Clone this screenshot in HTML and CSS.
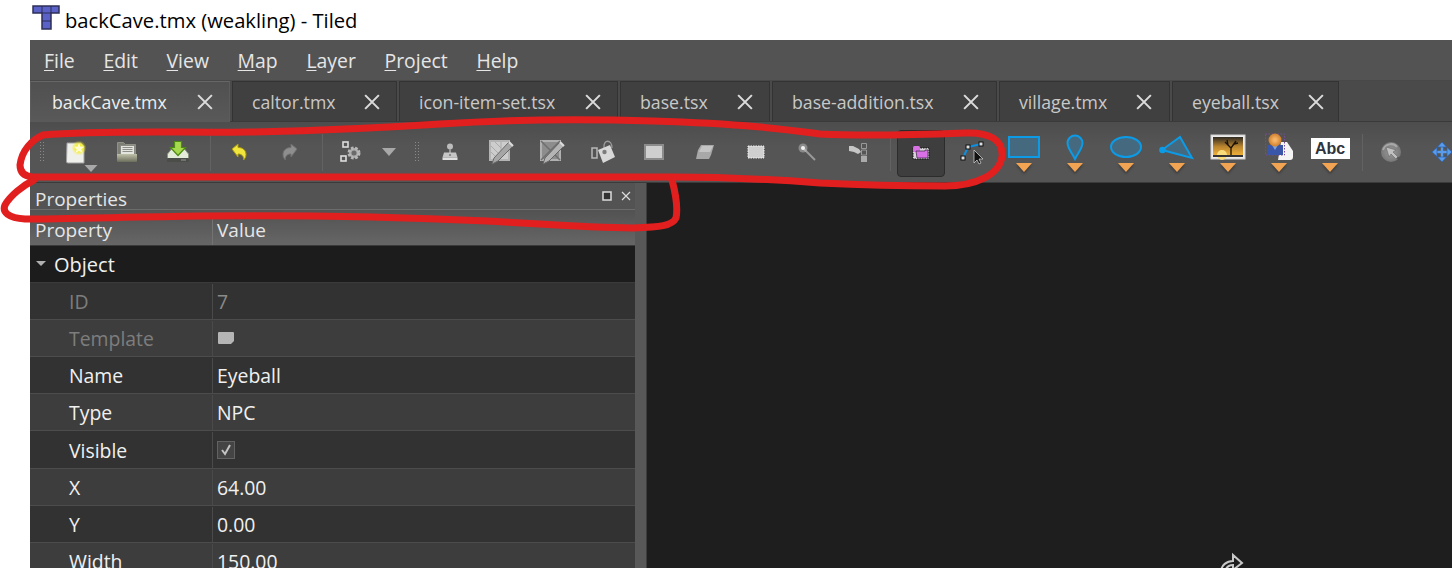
FILE: index.html
```html
<!DOCTYPE html>
<html lang="en">
<head>
<meta charset="utf-8">
<title>backCave.tmx (weakling) - Tiled</title>
<link rel="stylesheet" href="styles.css">
</head>
<body>
<header class="titlebar">
  <svg class="app-icon" width="28" height="26" viewBox="0 0 28 26"><path d="M1 1h26v7h-8v16h-9V8H1z" fill="#5a62c8" stroke="#2c2f55" stroke-width="1.5"/><path d="M10 1v7M19 1v7M10 8h9M10 16h9" stroke="#2c2f55"/></svg>
  <span class="title-text">backCave.tmx (weakling) - Tiled</span>
</header>
<main class="window">
  <nav class="menubar">
    <span class="menu"><u>F</u>ile</span><span class="menu"><u>E</u>dit</span><span class="menu"><u>V</u>iew</span><span class="menu"><u>M</u>ap</span><span class="menu"><u>L</u>ayer</span><span class="menu"><u>P</u>roject</span><span class="menu"><u>H</u>elp</span>
  </nav>
  <div class="tabbar">
    <div class="tab active t1"><span>backCave.tmx</span><svg class="close" viewBox="0 0 14 14"><path d="M1 1l12 12M13 1L1 13"/></svg></div>
    <div class="tab t2"><span>caltor.tmx</span><svg class="close" viewBox="0 0 14 14"><path d="M1 1l12 12M13 1L1 13"/></svg></div>
    <div class="tab t3"><span>icon-item-set.tsx</span><svg class="close" viewBox="0 0 14 14"><path d="M1 1l12 12M13 1L1 13"/></svg></div>
    <div class="tab t4"><span>base.tsx</span><svg class="close" viewBox="0 0 14 14"><path d="M1 1l12 12M13 1L1 13"/></svg></div>
    <div class="tab t5"><span>base-addition.tsx</span><svg class="close" viewBox="0 0 14 14"><path d="M1 1l12 12M13 1L1 13"/></svg></div>
    <div class="tab t6"><span>village.tmx</span><svg class="close" viewBox="0 0 14 14"><path d="M1 1l12 12M13 1L1 13"/></svg></div>
    <div class="tab t7"><span>eyeball.tsx</span><svg class="close" viewBox="0 0 14 14"><path d="M1 1l12 12M13 1L1 13"/></svg></div>
  </div>
  <div class="toolbar">
    <span class="grip first"></span>
    <span class="tool"><svg width="44" height="44" viewBox="0 0 44 44"><defs><radialGradient id="glow"><stop offset="0.35" stop-color="#f4ee10"/><stop offset="1" stop-color="#f4ee10" stop-opacity="0"/></radialGradient></defs><path d="M13 13h14l3 3v17H14a1.500 1.500 0 0 1-1.500-1.500z" fill="#efefeb" stroke="#a0a0a0"/><circle cx="25" cy="18" r="7.500" fill="url(#glow)"/><path d="M25 13l1.500 3.400 3.700.3-2.800 2.500.9 3.600-3.300-1.900-3.300 1.900.9-3.600-2.800-2.500 3.700-.3z" fill="#fefcd0"/><path d="M30.500 35h13L37 42z" fill="#a8a8a8"/></svg></span>
    <span class="tool"><svg width="22" height="22" viewBox="0 0 22 22"><defs><linearGradient id="front" x1="0" y1="0" x2="0" y2="1"><stop offset="0" stop-color="#bfc1aa"/><stop offset="1" stop-color="#6c6e5c"/></linearGradient></defs><path d="M1.500 1.500h6l2 2h10v10h-18z" fill="#7d7f74" stroke="#8f9186"/><rect x="4.500" y="4.500" width="14" height="9" fill="#e4e4de" stroke="#8a8a84"/><path d="M6.500 6.500h10M6.500 8.500h10M6.500 10.500h10" stroke="#8e8e88"/><path d="M1 13h20v7a1 1 0 0 1-1 1H2a1 1 0 0 1-1-1z" fill="url(#front)"/></svg></span>
    <span class="tool"><svg width="24" height="24" viewBox="0 0 24 24"><path d="M1.500 14l4-5h13l4 5v6h-21z" fill="#e4ebd9" stroke="#8b9084"/><rect x="1" y="18" width="22" height="4" rx="1" fill="#4a4d48"/><path d="M15 20h5" stroke="#999"/><path d="M8.500 1.500h7v6h4L12 15.500 4.500 7.500h4z" fill="#a6da4c" stroke="#4f8a12" stroke-width="1.200"/></svg></span>
    <span class="sep"></span>
    <span class="tool"><svg width="16" height="18" viewBox="0 0 16 18"><path d="M1 6l6-5v3.500c5 0 8 3 8 7 0 3-1.500 4.500-2.500 5.500.5-3.500-1.500-6-5.500-6V14z" fill="#f2e63c" stroke="#a89a10"/></svg></span>
    <span class="tool"><svg width="16" height="18" viewBox="0 0 16 18"><path d="M15 6L9 1v3.500c-5 0-8 3-8 7 0 3 1.500 4.500 2.500 5.500C3 13.500 5 11 9 11V14z" fill="#8e8e8e" stroke="#707070"/></svg></span>
    <span class="sep"></span>
    <span class="tool"><svg width="22" height="22" viewBox="0 0 22 22"><rect x="3" y="1" width="5" height="5" fill="#555" stroke="#ddd" stroke-width="1.600"/><rect x="1" y="15" width="5" height="5" fill="#555" stroke="#ddd" stroke-width="1.600"/><circle cx="14" cy="12" r="5" fill="#aaa" stroke="#b8b8b8" stroke-width="3" stroke-dasharray="2.500 1.500"/><circle cx="14" cy="12" r="2.500" fill="#6a6a6a"/></svg></span>
    <span class="drop"><svg width="14" height="8" viewBox="0 0 14 8"><path d="M0 0h14L7 8z" fill="#a8a8a8"/></svg></span>
    <span class="grip second"></span>
    <span class="tool"><svg width="16" height="18" viewBox="0 0 16 18"><circle cx="8" cy="3.500" r="3" fill="#bcbcbc"/><path d="M7 6h2v4H7z" fill="#999"/><path d="M2 9.500h12l1.500 5h-15z" fill="#c6c6c6"/><rect x=".5" y="14.500" width="15" height="2.500" fill="#e0e0e0"/><circle cx="8" cy="12" r="1" fill="#777"/></svg></span>
    <span class="tool"><svg width="26" height="26" viewBox="0 0 26 26"><rect x="2" y="2" width="19" height="19" fill="#cdcdcd" stroke="#b4b4b4" stroke-width="2"/><path d="M3 7l9 9M7 3l6 6M3 13l6 6M13 3v9h7" stroke="#aaa" fill="none"/><path d="M25 7l-15 15-6 3 2-6L21 3z" fill="#a6a6a6" stroke="#6a6a6a"/><path d="M21 3l4 4" stroke="#ddd" stroke-width="2"/></svg></span>
    <span class="tool"><svg width="26" height="26" viewBox="0 0 26 26"><rect x="2" y="2" width="19" height="19" fill="#8d8d8d" stroke="#b0b0b0" stroke-width="2"/><path d="M2 2l19 19M21 2L2 21" stroke="#6e6e6e" stroke-width="1.500"/><path d="M25 7l-15 15-6 3 2-6L21 3z" fill="#b4b4b4" stroke="#666"/><path d="M21 3l4 4" stroke="#ddd" stroke-width="2"/></svg></span>
    <span class="tool"><svg width="26" height="26" viewBox="0 0 26 26"><path d="M14 9c-1-9 8-9 8 0" fill="none" stroke="#9c9c9c" stroke-width="1.300"/><path d="M8 11l12-5 5 12-12 6z" fill="#d8d8d8"/><circle cx="14.500" cy="13" r="2.200" fill="#7c7c7c"/><path d="M2 9h5v10H2z" fill="none" stroke="#b8b8b8" stroke-width="1.500"/></svg></span>
    <span class="tool"><svg width="20" height="16" viewBox="0 0 20 16"><rect x="1" y="1" width="18" height="14" fill="#cfcfcf" stroke="#8c8c8c" stroke-width="2"/></svg></span>
    <span class="tool"><svg width="20" height="16" viewBox="0 0 20 16"><path d="M1 15l2-9 3-5h13l-3 10-2 4z" fill="#a8a8a8"/><path d="M4 8l3-6h11l-3 6z" fill="#c4c4c4"/></svg></span>
    <span class="tool"><svg width="18" height="14" viewBox="0 0 18 14"><rect x="1" y="1" width="16" height="12" fill="#cfcfcf" stroke="#f2f2f2" stroke-dasharray="1.500 1"/></svg></span>
    <span class="tool"><svg width="18" height="18" viewBox="0 0 18 18"><path d="M5 5l12 12" stroke="#999" stroke-width="2"/><circle cx="5" cy="5" r="4.500" fill="#ccc" opacity=".45"/><circle cx="5" cy="5" r="2" fill="#f2f2f2"/></svg></span>
    <span class="tool"><svg width="20" height="22" viewBox="0 0 20 22"><path d="M1 5h4l6 3 2 3-3 2-4-2-5-1z" fill="#c6c6c6"/><path d="M13.500 2.500h5v5h-5zM13.500 9h5v5h-5z" fill="none" stroke="#999"/><rect x="13" y="15" width="6" height="6" fill="#aaa"/></svg></span>
    <span class="sep wide"></span>
    <span class="tool selected"><svg width="18" height="14" viewBox="0 0 18 14"><rect x="1" y="2" width="16" height="11" fill="#d9d4da" stroke="#111" stroke-dasharray="1.500 1"/><rect x="1" y="0" width="7" height="6" rx="1.500" fill="#d970e6"/><path d="M4 5h9V4h3v8H5z" fill="#d970e6" stroke="#30203a" stroke-width=".7"/></svg></span>
    <span class="tool edit"><svg width="26" height="26" viewBox="0 0 26 26"><path d="M3 19L8 8l13-3" fill="none" stroke="#0e8fe0" stroke-width="2"/><rect x="1" y="17" width="4" height="4" fill="#ddd" stroke="#111"/><rect x="6" y="6" width="4" height="4" fill="#ddd" stroke="#111"/><rect x="19" y="3" width="4" height="4" fill="#ddd" stroke="#111"/><path d="M14 11v13l3-3 2 4 2-1-2-4h4z" fill="#111" stroke="#ddd" stroke-width=".7"/></svg></span>
    <span class="tool obj"><svg width="34" height="26" viewBox="0 0 34 26"><rect x="2" y="3" width="30" height="20" fill="#456a80" stroke="#0c9be6" stroke-width="2"/></svg><i class="caret"></i></span>
    <span class="tool obj"><svg width="20" height="26" viewBox="0 0 20 26"><path d="M10 25C7 19 2.500 14 2.500 9a7.500 7.500 0 0 1 15 0c0 5-4.500 10-7.500 16z" fill="#456a80" stroke="#0c9be6" stroke-width="2"/></svg><i class="caret"></i></span>
    <span class="tool obj"><svg width="34" height="26" viewBox="0 0 34 26"><ellipse cx="17" cy="13" rx="15" ry="10" fill="#456a80" stroke="#0c9be6" stroke-width="2"/></svg><i class="caret"></i></span>
    <span class="tool obj"><svg width="36" height="26" viewBox="0 0 36 26"><path d="M3 16L21 3l12 21z" fill="#456a80" stroke="#0c9be6" stroke-width="2"/><circle cx="3.500" cy="16" r="3.300" fill="#0c9be6"/></svg><i class="caret"></i></span>
    <span class="tool obj"><svg width="36" height="26" viewBox="0 0 36 26"><defs><linearGradient id="sky" x1="0" y1="0" x2="0" y2="1"><stop offset="0" stop-color="#2e2a22"/><stop offset=".5" stop-color="#b9842e"/><stop offset="1" stop-color="#f4b43a"/></linearGradient></defs><rect x="1" y="1" width="34" height="24" fill="#ececec" stroke="#cfcfcf"/><rect x="3" y="3" width="30" height="19" fill="url(#sky)"/><circle cx="12" cy="21" r="5" fill="#f8dc7c"/><rect x="3" y="21" width="30" height="2" fill="#333"/><path d="M21 21v-8M21 14l-6-6M21 14l5-7M18 11l-1-5M24 10l4-1" stroke="#1a1208" stroke-width="1.300" fill="none"/></svg><i class="caret"></i></span>
    <span class="tool obj"><svg width="30" height="26" viewBox="0 0 30 26"><defs><radialGradient id="sun"><stop offset="0.2" stop-color="#f6b468"/><stop offset="1" stop-color="#cf7f2c"/></radialGradient></defs><path d="M17 8h6l6 9v6a3 3 0 0 1-3 3H14z" fill="#f4f4f4"/><rect x="1.500" y="0" width="19" height="21" fill="none" stroke="#7a4a9a" stroke-dasharray="1.500 1.500"/><path d="M3 11h16v10H3z" fill="#3a56a8"/><path d="M8 11l3 5 3-5z" fill="#7fa4d8"/><circle cx="11" cy="6" r="6.500" fill="url(#sun)"/></svg><i class="caret"></i></span>
    <span class="tool obj"><span class="abc">Abc</span><i class="caret"></i></span>
    <span class="sep"></span>
    <span class="tool"><svg width="22" height="22" viewBox="0 0 22 22"><defs><radialGradient id="ball"><stop offset="0" stop-color="#9a9a9a"/><stop offset="1" stop-color="#787878"/></radialGradient></defs><circle cx="11" cy="11" r="10" fill="url(#ball)"/><path d="M3 9c2-6 10-8 14-3" fill="none" stroke="#a8a8a8" stroke-width="2"/><path d="M6 6l10 3-3 2 5 5-2 2-5-5-2 3z" fill="#c0c0c0" stroke="#666" stroke-width=".6"/><path d="M16 17l5-2-1 4z" fill="#555"/></svg></span>
    <span class="tool"><svg width="20" height="20" viewBox="0 0 20 20"><path d="M10 2v16M2 10h16" stroke="#5a9cec" stroke-width="2.400"/><path d="M10 0L5.500 5h9zM10 20l-4.500-5h9zM0 10l5-4.500v9zM20 10l-5-4.500v9z" fill="#5a9cec" stroke="#2a62b0" stroke-width=".7"/></svg></span>
  </div>
  <div class="workspace">
    <section class="panel">
      <div class="dock-title">
        <span class="dock-label">Properties</span>
        <span class="dock-btns">
          <svg width="10" height="10" viewBox="0 0 10 10"><rect x="1" y="1" width="8" height="8" fill="#333" stroke="#ddd" stroke-width="1.500"/></svg>
          <svg width="10" height="10" viewBox="0 0 10 10"><path d="M1 1l8 8M9 1L1 9" stroke="#ddd" stroke-width="1.200"/></svg>
        </span>
      </div>
      <div class="table-head"><span class="c1">Property</span><span class="c2">Value</span></div>
      <div class="row group"><i class="arrow"></i><span>Object</span></div>
      <div class="row dim odd"><span class="c1 in">ID</span><span class="c2">7</span></div>
      <div class="row dim"><span class="c1 in">Template</span><span class="c2"><svg class="tpl" width="18" height="14" viewBox="0 0 18 14"><path d="M2 1h14a1 1 0 0 1 1 1v8l-3 3H2a1 1 0 0 1-1-1V2a1 1 0 0 1 1-1z" fill="#b5b5b5"/></svg></span></div>
      <div class="row odd"><span class="c1 in">Name</span><span class="c2">Eyeball</span></div>
      <div class="row"><span class="c1 in">Type</span><span class="c2">NPC</span></div>
      <div class="row odd"><span class="c1 in">Visible</span><span class="c2"><span class="check"><svg width="12" height="12" viewBox="0 0 12 12"><path d="M2 6l3 4 5-9" fill="none" stroke="#c4c4c4" stroke-width="2"/></svg></span></span></div>
      <div class="row"><span class="c1 in">X</span><span class="c2">64.00</span></div>
      <div class="row odd"><span class="c1 in">Y</span><span class="c2">0.00</span></div>
      <div class="row"><span class="c1 in">Width</span><span class="c2">150.00</span></div>
    </section>
    <div class="splitter"></div>
    <section class="canvas">
      <svg class="cursor-redo" width="26" height="16" viewBox="0 0 26 16"><path d="M1 20c0-7 6-11 12-11V3l9 8-9 7v-5c-4 0-7 2-8 7" fill="none" stroke="#c8c8c8" stroke-width="2"/></svg>
    </section>
  </div>
</main>
<svg class="scribble" width="1452" height="568" viewBox="0 0 1452 568"><path d="M43 135C32 140 22 150 20 165C20 172 24 176 32 177C120 178 300 177 480 177C560 177 620 177 672 177C720 177 780 180 820 183C860 185 900 186 945 186C975 186 1000 175 1002 156C1003 140 990 132 965 133C910 135 860 136 820 134C790 130 750 124 653 121C560 118 500 120 440 124C380 128 300 131 250 132C180 133 100 130 43 135Z" /><path d="M672 180C676 195 678 208 676 218C672 226 660 227 633 228C590 228 540 224 487 221C400 217 300 215 200 216C130 217 60 219 25 219C8 218 2 212 5 205C10 196 22 186 34 180"/></svg>
</body>
</html>
```
FILE: styles.css
```css
* { box-sizing: border-box; }
html, body { margin: 0; height: 100%; overflow: hidden; background: #fff; }
body { position: relative; font-family: "Open Sans", "Noto Sans", "Liberation Sans", sans-serif; }
.titlebar { height: 40px; padding-left: 32px; display: flex; align-items: center; gap: 5px; color: #000; font-size: 20.2px; }
.app-icon { margin-top: -4px; }
.window { margin-left: 30px; height: 528px; background: #535353; color: #e6e6e6; font-size: 19.4px; overflow: hidden; }
.menubar { height: 40px; padding-left: 14px; display: flex; align-items: center; gap: 28.7px; background: #535353; }
.menu u { text-underline-offset: 2px; }
.tabbar { height: 42px; display: flex; align-items: stretch; gap: 2px; border-top: 1px solid #484848; border-bottom: 1px solid #3a3a3a; background: #4a4a4a; }
.tab { display: flex; align-items: center; padding: 0 16px 0 19px; background: #404040; color: #c9c9c9; border: 1px solid #333; border-bottom: 0; font-size: 17.7px; flex: none; }
.tab.active { background: linear-gradient(#505050, #595959); color: #eee; border-color: #5c5c5c; border-top-color: #666; margin-bottom: -1px; }
.close { width: 16px; height: 16px; margin-left: auto; fill: none; stroke: #dcdcdc; stroke-width: 1.8; }
.t1 { width: 200px; padding-left: 21px; } .t2 { width: 165px; } .t3 { width: 219px; } .t4 { width: 150px; }
.t5 { width: 225px; padding-right: 17px; } .t6 { width: 171px; padding-right: 17px; } .t7 { width: 167px; padding-right: 14px; }
.toolbar { height: 61px; display: flex; align-items: center; padding-left: 9px; background: linear-gradient(#4d4d4d, #555 40%, #555); border-bottom: 1px solid #3b3b3b; white-space: nowrap; }
.tool { flex: none; width: 51px; height: 48px; display: flex; flex-direction: column; align-items: center; justify-content: center; position: relative; }
.tool.selected { width: 48px; height: 47px; margin: 2px 1.5px 0; background: #3e3e3e; border: 1px solid #2c2c2c; border-radius: 4px; }
.tool.edit { width: 52px; }
.tool.obj { justify-content: flex-start; padding-top: 5.5px; }
.obj svg { overflow: visible; flex: none; }
.caret { width: 0; height: 0; margin-top: 3px; border-left: 8px solid transparent; border-right: 8px solid transparent; border-top: 9px solid #f2a452; filter: drop-shadow(0 2px 1px rgba(0,0,0,.3)); }
.abc { width: 39px; height: 21px; margin: 4px 0 1px; background: #fff; color: #2f343c; font: 700 16px/21px "Liberation Sans", sans-serif; text-align: center; }
.sep { flex: none; width: 10px; height: 37px; position: relative; }
.sep::after { content: ""; position: absolute; left: 6.5px; top: 0; bottom: 0; width: 1px; background: #626262; }
.sep.wide { width: 12px; }
.drop { flex: none; width: 24px; display: flex; justify-content: center; }
.grip { flex: none; width: 6px; height: 22px; background-image: radial-gradient(circle, #8a8a8a 1px, transparent 1px); background-size: 3px 3px; }
.grip.first { margin-right: 5.5px; }
.grip.second { margin: 0 4.5px 0 13.5px; }
.workspace { height: 385px; display: flex; }
.panel { width: 605px; flex: none; background: #535353; }
.splitter { width: 12px; flex: none; background: #585858; border-right: 1px solid #3d3d3d; }
.canvas { flex: 1; position: relative; background: #1e1e1e; }
.cursor-redo { position: absolute; left: 573px; top: 369px; }
.dock-title { height: 26px; padding: 0 4px 0 5px; display: flex; justify-content: space-between; align-items: flex-start; }
.dock-label { font-size: 19px; line-height: 26px; padding-top: 3px; }
.dock-btns { display: flex; gap: 9px; align-items: center; height: 26px; }
.table-head { height: 36.5px; padding-top: 5px; display: flex; align-items: center; background: linear-gradient(#525252, #666); border-top: 1px solid #6c6c6c; border-bottom: 1px solid #3a3a3a; font-size: 19px; }
.c1 { width: 183px; flex: none; padding-left: 5px; height: 100%; display: flex; align-items: center; border-right: 1px solid #4a4a4a; }
.c1.in { padding-left: 39px; }
.table-head .c1 { border-right-color: #737373; }
.c2 { padding-left: 4px; display: flex; align-items: center; }
.row { height: 37.2px; padding-top: 1px; display: flex; align-items: center; background: #3d3d3d; border-bottom: 1px solid #4c4c4c; color: #f0f0f0; }
.row.odd { background: #323232; }
.row.group { background: #1c1c1c; padding: 2px 0 0 24px; border-bottom-color: #3a3a3a; position: relative; font-size: 20px; }
.arrow { position: absolute; left: 6px; top: 15px; width: 0; height: 0; border-left: 5px solid transparent; border-right: 5px solid transparent; border-top: 5px solid #b0b0b0; }
.row.dim { color: #7d7d7d; }
.row.dim .c2 { color: #8a8a8a; }
.check { width: 18px; height: 18px; display: flex; align-items: center; justify-content: center; border: 1px solid #626262; background: #444; }
.scribble { position: absolute; left: 0; top: 0; fill: none; stroke: #e21f1f; stroke-width: 7; pointer-events: none; stroke-linecap: round; }
```
